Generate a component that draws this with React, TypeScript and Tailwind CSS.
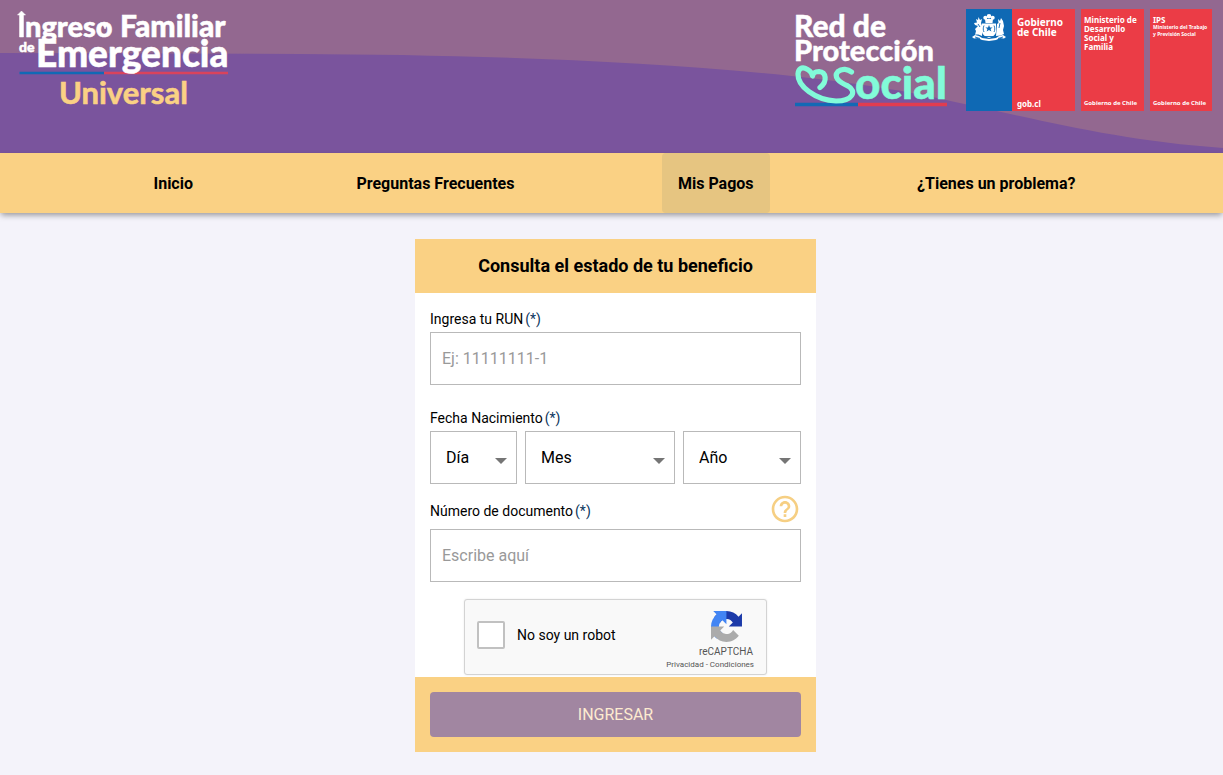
import React from "react"

const NAV_ITEMS = [
	{ label: "Inicio", href: "#inicio", active: false },
	{ label: "Preguntas Frecuentes", href: "#preguntas", active: false },
	{ label: "Mis Pagos", href: "#pagos", active: true },
	{ label: "¿Tienes un problema?", href: "#problema", active: false },
]

const MONTHS = [
	"Enero",
	"Febrero",
	"Marzo",
	"Abril",
	"Mayo",
	"Junio",
	"Julio",
	"Agosto",
	"Septiembre",
	"Octubre",
	"Noviembre",
	"Diciembre",
]
const DAYS = Array.from({ length: 31 }, (_, i) => String(i + 1))
const YEARS = Array.from({ length: 100 }, (_, i) => String(2021 - i))

const LOGO_FONT = "font-['Lato',sans-serif] font-bold"
const LOGO_FONT_HEAVY = "font-['Lato',sans-serif] font-black"
const GOB_FONT = "font-['Noto_Sans',sans-serif] font-bold"

const IngresoFamiliarLogo: React.FC = () => (
	<svg width="230" height="112" viewBox="0 0 230 112" role="img" aria-label="Ingreso Familiar de Emergencia Universal">
		<path d="M19.5 73H104" stroke="#1269b5" strokeWidth="2.4" />
		<path d="M104 73H228" stroke="#d9435c" strokeWidth="2.4" />
		<g className={LOGO_FONT_HEAVY} fill="#fff" stroke="#fff" strokeWidth="0.5">
			<path d="M21.500 11l4 4h-2v22h-4V15h-2z" />
			<text x="25" y="37" fontSize="29">
				ngreso
			</text>
			{/* notch that turns the counter of the "o" into a heart */}
			<path d="M103 25h4l-2 4z" />
			<text x="120" y="37" fontSize="30">
				Familiar
			</text>
			<text x="19" y="52" fontSize="14">
				de
			</text>
			<text x="36" y="67" fontSize="37">
				Emergencia
			</text>
		</g>
		<text className={LOGO_FONT} x="59" y="104" fontSize="31" fill="#fad184" stroke="#fad184" strokeWidth="0.6">
			Universal
		</text>
	</svg>
)

const RedProteccionLogo: React.FC = () => (
	<svg width="156" height="112" viewBox="793 0 156 112" role="img" aria-label="Red de Protección Social">
		<path d="M795 104.500H858" stroke="#1269b5" strokeWidth="3.4" />
		<path d="M858 104.500H947" stroke="#e13c50" strokeWidth="3.4" />
		<g className={LOGO_FONT_HEAVY} fill="#fff" stroke="#fff" strokeWidth="0.4">
			<text x="794" y="37" fontSize="30">
				Red de
			</text>
			<text x="794" y="61" fontSize="29">
				Protección
			</text>
		</g>
		<path
			d="M820 87.500C828 81 826 72 819 71.500C815 71.500 813 73 812.500 76C811 69 799 63 798 74C797.500 86 815 100 836 101C853 101 857 91 848 86C839 82 833 77 838 71.500C842 68 848 69 851.500 72"
			fill="none"
			stroke="#82fbd9"
			strokeWidth="5.200"
			strokeLinecap="round"
			strokeLinejoin="round"
		/>
		<text
			className={LOGO_FONT_HEAVY}
			x="855"
			y="99"
			fontSize="44"
			fill="#82fbd9"
			stroke="#82fbd9"
			strokeWidth="0.5"
		>
			ocial
		</text>
	</svg>
)

const Crest: React.FC = () => (
	<svg width="36" height="27" viewBox="0 0 36 27" fill="#fff" aria-hidden="true">
		<circle cx="14.300" cy="3.800" r="2" />
		<circle cx="18" cy="2.300" r="2.300" />
		<circle cx="21.700" cy="3.800" r="2" />
		<path d="M14 5h8l-.5 4h-7z" />
		<path d="M11 9.500h14v8c0 3.500-4 5.500-7 6.500-3-1-7-3-7-6.500z" />
		<path d="M11 22c-2-1-5-2-7-1l1-4-1-2 3-3-3-1-1-2 3-.5L5 5l2 1 .5-3L9 6l2-1-1 4 1.500 4z" />
		<path d="M25 22c3 0 6-1 8-2l-1-4 1-4-1-5-2-3-1 3-2-2 .5 4-1.500 1z" />
		<path d="M1 23l3-2 4 1 3 2 7 1 7-1 3-2 4-1 3 2-2 1.500-4-.5-4 2-7 1-7-1-4-2-4 .5z" />
		<path
			d="M13 11.500c-1 2-1 5 0 6.500M23 11.500c1 2 1 5 0 6.500M7 10l2 3M29 9l-1 5M4 23l5 1.500M32 23l-5 1.500M14 22.500h8"
			fill="none"
			stroke="#0f69b4"
			strokeWidth="0.9"
		/>
		<path d="M18 11l1 2.500h2.600l-2 1.600.8 2.500-2.400-1.500-2.400 1.500.8-2.500-2-1.600H17z" fill="#0f69b4" />
	</svg>
)

const GovernmentPlates: React.FC = () => (
	<div className={`flex gap-[6px] text-white ${GOB_FONT}`}>
		<div className="flex h-[102px] w-[109px] bg-[#eb3c46]">
			<div className="flex w-[46px] justify-center bg-[#0f69b4] pt-[5px]">
				<Crest />
			</div>
			<div className="flex flex-col justify-between pt-2 pb-[1px] pl-[5px]">
				<p className="text-[10px] leading-[10px]">
					Gobierno
					<br />
					de Chile
				</p>
				<p className="text-[8px] leading-[12px]">gob.cl</p>
			</div>
		</div>
		<div className="flex h-[102px] w-[63px] flex-col justify-between bg-[#eb3c46] pt-[6px] pb-[2px] pl-[3px] whitespace-nowrap">
			<p className="text-[8px] leading-[9px]">
				Ministerio de
				<br />
				Desarrollo
				<br />
				Social y
				<br />
				Familia
			</p>
			<p className="text-[6px] leading-[12px]">Gobierno de Chile</p>
		</div>
		<div className="flex h-[102px] w-[62px] flex-col justify-between bg-[#eb3c46] pt-[6px] pb-[2px] pl-[3px] whitespace-nowrap">
			<div>
				<p className="text-[8px] leading-[9px]">IPS</p>
				<p className="text-[5px] leading-[7px]">
					Ministerio del Trabajo
					<br />y Previsión Social
				</p>
			</div>
			<p className="text-[6px] leading-[12px]">Gobierno de Chile</p>
		</div>
	</div>
)

const Header: React.FC = () => (
	<header className="grid h-[153px] bg-[#7a549d]">
		<svg
			className="col-start-1 row-start-1 h-[153px] w-full"
			viewBox="0 0 1223 153"
			preserveAspectRatio="none"
			aria-hidden="true"
		>
			<path d="M0 0H1223V148C1120 141 1040 120 955 102C800 65 520 55 300 54L0 53Z" fill="#936890" />
		</svg>
		<div className="col-start-1 row-start-1 flex items-start justify-between pr-[11px]">
			<IngresoFamiliarLogo />
			<div className="flex gap-[17px]">
				<RedProteccionLogo />
				<div className="pt-[9px]">
					<GovernmentPlates />
				</div>
			</div>
		</div>
	</header>
)

const NavBar: React.FC = () => (
	<nav className="flex h-[60px] justify-evenly bg-[#fad184] pl-1.5 shadow-[0_3px_6px_-1px_rgba(0,0,0,0.4)]">
		{NAV_ITEMS.map((item) => (
			<a
				key={item.href}
				href={item.href}
				aria-current={item.active ? "page" : undefined}
				className={`flex items-center rounded px-4 pt-[2px] text-base font-bold ${item.active ? "bg-[#e6c581]" : ""}`}
			>
				{item.label}
			</a>
		))}
	</nav>
)

const FieldLabel: React.FC<{ htmlFor: string; children: React.ReactNode }> = ({ htmlFor, children }) => (
	<label htmlFor={htmlFor} className="flex gap-[2px] text-sm leading-5">
		{children}
		<span className="text-[#0b3660]">(*)</span>
	</label>
)

const TextField: React.FC<{ id: string; placeholder: string }> = ({ id, placeholder }) => (
	<input
		id={id}
		type="text"
		placeholder={placeholder}
		className="block h-[53px] w-full border border-[#b9b9b9] bg-white px-[11px] text-base placeholder:text-[#999]"
	/>
)

const SelectField: React.FC<{ id: string; label: string; options: string[]; className: string }> = ({
	id,
	label,
	options,
	className,
}) => (
	<div className={`grid h-[53px] items-center border border-[#b9b9b9] bg-white ${className}`}>
		<select
			id={id}
			aria-label={label}
			defaultValue=""
			className="col-start-1 row-start-1 h-full w-full appearance-none bg-transparent px-[15px] text-base"
		>
			<option value="">{label}</option>
			{options.map((option) => (
				<option key={option}>{option}</option>
			))}
		</select>
		<svg
			className="pointer-events-none col-start-1 row-start-1 mt-[6px] mr-[9px] justify-self-end"
			width="12"
			height="6"
			viewBox="0 0 12 6"
			aria-hidden="true"
		>
			<path d="M0 0h12L6 6z" fill="#757575" />
		</svg>
	</div>
)

const RecaptchaIcon: React.FC = () => (
	<svg width="31" height="31" viewBox="0 0 64 64" aria-hidden="true">
		<path
			d="M64 31.955l-.033-1.370V4.687l-7.160 7.160C50.948 4.674 42.033.093 32.050.093c-10.400 0-19.622 4.960-25.458 12.640l11.736 11.860a15.550 15.550 0 0 1 4.754-5.334c2.050-1.600 4.952-2.906 8.968-2.906.485 0 .86.057 1.135.163 4.976.393 9.288 3.140 11.828 7.124l-8.307 8.307L64 31.953"
			fill="#1c3aa9"
		/>
		<path
			d="M31.862.094l-1.370.033H4.594l7.160 7.160C4.580 13.147 0 22.060 0 32.046c0 10.400 4.960 19.622 12.640 25.458L24.500 45.768a15.550 15.550 0 0 1-5.334-4.754c-1.600-2.050-2.906-4.952-2.906-8.968 0-.485.057-.86.163-1.135.393-4.976 3.140-9.288 7.124-11.828l8.307 8.307L31.860.095"
			fill="#4285f4"
		/>
		<path
			d="M.001 32.045l.033 1.370v25.898l7.160-7.160c5.860 7.173 14.774 11.754 24.760 11.754 10.400 0 19.622-4.960 25.458-12.640l-11.736-11.860a15.550 15.550 0 0 1-4.754 5.334c-2.050 1.600-4.952 2.906-8.968 2.906-.485 0-.86-.057-1.135-.163-4.976-.393-9.288-3.140-11.828-7.124l8.307-8.307L.001 32.047"
			fill="#ababab"
		/>
	</svg>
)

const Recaptcha: React.FC = () => (
	<div className="mx-auto flex h-[76px] w-[303px] justify-between rounded-[3px] border border-[#d3d3d3] bg-[#f9f9f9] pr-3 pl-3 shadow-[0_0_2px_rgba(0,0,0,0.1)]">
		<label className="flex items-center gap-3 pb-1 text-sm">
			<input type="checkbox" className="size-7 appearance-none rounded-[2px] border-2 border-[#c1c1c1] bg-white" />
			No soy un robot
		</label>
		<div className="flex flex-col items-end pt-[11px] text-[#555]">
			<div className="pr-3">
				<RecaptchaIcon />
			</div>
			<p className="pt-[3px] pr-[1px] text-[10px] leading-[14px]">reCAPTCHA</p>
			<p className="text-[8px] leading-[12px]">
				<a href="#privacidad">Privacidad</a> - <a href="#condiciones">Condiciones</a>
			</p>
		</div>
	</div>
)

const HelpIcon: React.FC = () => (
	<svg width="32" height="32" viewBox="0 0 24 24" fill="#f6cf83" aria-hidden="true">
		<path d="M11 18h2v-2h-2v2zm1-16C6.480 2 2 6.480 2 12s4.480 10 10 10 10-4.480 10-10S17.520 2 12 2zm0 18c-4.410 0-8-3.590-8-8s3.590-8 8-8 8 3.590 8 8-3.590 8-8 8zm0-14c-2.210 0-4 1.790-4 4h2c0-1.100.9-2 2-2s2 .9 2 2c0 2-3 1.750-3 5h2c0-2.250 3-2.500 3-5 0-2.210-1.790-4-4-4z" />
	</svg>
)

const BenefitForm: React.FC = () => (
	<form className="w-full max-w-[401px] bg-white" onSubmit={(e) => e.preventDefault()}>
		<h1 className="bg-[#fad184] py-[13px] text-center text-lg leading-7 font-bold">
			Consulta el estado de tu beneficio
		</h1>

		<div className="px-[15px] pt-4 pb-[2px]">
			<div className="flex flex-col gap-[3px]">
				<FieldLabel htmlFor="run">Ingresa tu RUN</FieldLabel>
				<TextField id="run" placeholder="Ej: 11111111-1" />
			</div>

			<div className="flex flex-col gap-[3px] pt-[23px]">
				<FieldLabel htmlFor="dia">Fecha Nacimiento</FieldLabel>
				<div className="flex gap-2">
					<SelectField id="dia" label="Día" options={DAYS} className="w-[87px]" />
					<SelectField id="mes" label="Mes" options={MONTHS} className="flex-1" />
					<SelectField id="anio" label="Año" options={YEARS} className="w-[118px]" />
				</div>
			</div>

			<div className="flex items-end justify-between pt-[9px] pb-1">
				<div className="pb-1">
					<FieldLabel htmlFor="documento">Número de documento</FieldLabel>
				</div>
				<button type="button" aria-label="Ayuda número de documento">
					<HelpIcon />
				</button>
			</div>
			<TextField id="documento" placeholder="Escribe aquí" />

			<div className="pt-[17px]">
				<Recaptcha />
			</div>
		</div>

		<div className="bg-[#fad184] p-[15px]">
			<button type="submit" className="h-[45px] w-full rounded bg-[#a186a1] text-base text-[#fdebd0]">
				INGRESAR
			</button>
		</div>
	</form>
)

export default function App() {
	return (
		<div className="min-h-screen bg-[#f4f3fa] font-['Roboto',sans-serif] text-black">
			<Header />
			<NavBar />
			<main className="flex justify-center pt-[26px] pb-[23px] pl-2">
				<BenefitForm />
			</main>
		</div>
	)
}
